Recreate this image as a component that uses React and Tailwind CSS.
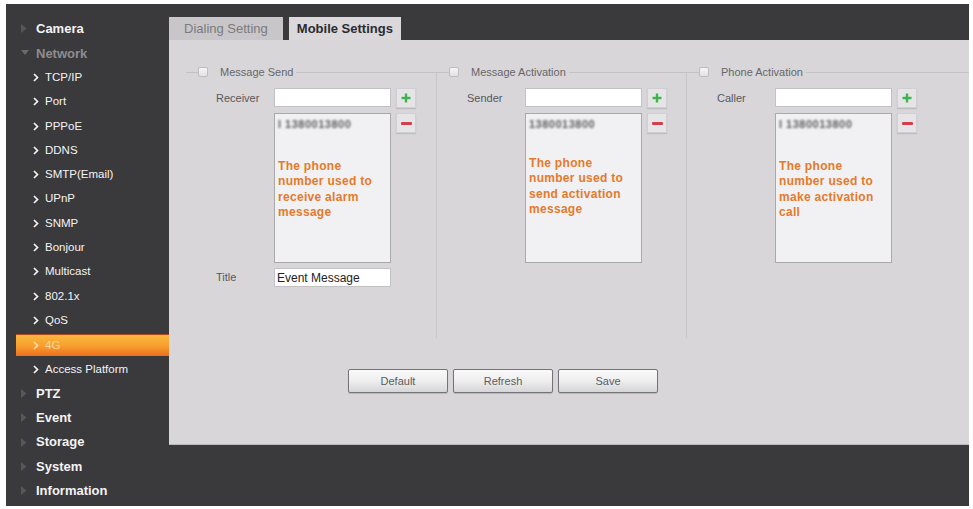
import React from "react";

const FONT = "font-['Liberation_Sans',Arial,sans-serif]";

const items = [
  { t: "Camera", k: "top" },
  { t: "Network", k: "open" },
  { t: "TCP/IP", k: "sub" },
  { t: "Port", k: "sub" },
  { t: "PPPoE", k: "sub" },
  { t: "DDNS", k: "sub" },
  { t: "SMTP(Email)", k: "sub" },
  { t: "UPnP", k: "sub" },
  { t: "SNMP", k: "sub" },
  { t: "Bonjour", k: "sub" },
  { t: "Multicast", k: "sub" },
  { t: "802.1x", k: "sub" },
  { t: "QoS", k: "sub" },
  { t: "4G", k: "sub", active: true },
  { t: "Access Platform", k: "sub" },
  { t: "PTZ", k: "top" },
  { t: "Event", k: "top" },
  { t: "Storage", k: "top" },
  { t: "System", k: "top" },
  { t: "Information", k: "top" },
];

function Chevron({ color }) {
  return (
    <svg width="6" height="9" viewBox="0 0 6 9" className="shrink-0">
      <polyline points="1,1 4.5,4.5 1,8" fill="none" stroke={color} strokeWidth="1.7" />
    </svg>
  );
}

function SideItem({ it }) {
  if (it.k === "sub") {
    if (it.active) {
      return (
        <div className="h-[24.3px] flex items-center">
          <div className="ml-[10px] h-[22px] flex-1 flex items-center pl-[17px] border-t border-[#b0461a] bg-gradient-to-b from-[#fbb73c] via-[#f7a030] to-[#ee6e1e]">
            <Chevron color="#fcd9a0" />
            <span className="ml-[6px] text-[11.5px] text-[#fbd59a]">{it.t}</span>
          </div>
        </div>
      );
    }
    return (
      <div className="h-[24.3px] flex items-center pl-[27px]">
        <Chevron color="#f4f4f4" />
        <span className="ml-[6px] text-[11.5px] text-[#f4f4f6]">{it.t}</span>
      </div>
    );
  }
  const open = it.k === "open";
  return (
    <div className="h-[24.3px] flex items-center pl-[15px]">
      {open ? (
        <svg width="8" height="6" viewBox="0 0 8 6" className="shrink-0 mr-[7px]">
          <polygon points="0,0 8,0 4,5" fill="#69686b" />
        </svg>
      ) : (
        <svg width="6" height="9" viewBox="0 0 6 9" className="shrink-0 mr-[9px]">
          <polygon points="0,0 5.5,4.5 0,9" fill="#57565a" />
        </svg>
      )}
      <span className={"text-[13px] font-bold " + (open ? "text-[#8e8d90]" : "text-[#f3f3f5]")}>{it.t}</span>
    </div>
  );
}

function Checkbox() {
  return <div className="w-[10px] h-[10px] shrink-0 rounded-[2px] border border-[#bdbcbf] bg-gradient-to-b from-[#f6f6f6] to-[#e2e2e4]" />;
}

function SmallBtn({ kind }) {
  return (
    <div className="w-[20px] h-[20px] flex items-center justify-center bg-[#e5e4e6] border border-[#d0cfd2] shadow-[0_1px_1px_rgba(0,0,0,0.12)]">
      {kind === "plus" ? (
        <svg width="10" height="10" viewBox="0 0 10 10">
          <rect x="3.8" y="0.5" width="2.4" height="9" fill="#3db54a" />
          <rect x="0.5" y="3.8" width="9" height="2.4" fill="#3db54a" />
        </svg>
      ) : (
        <div className="w-[11px] h-[3px] rounded-[1px] bg-[#d3404c]" />
      )}
    </div>
  );
}

function Column({ legend, label, blur, lines, textMt, title, cls }) {
  return (
    <div className={"h-[266px] flex flex-col " + cls}>
      <div className="h-[12px] -mt-[6px] flex items-center">
        <div className="w-[12px] h-px bg-[#c4c2c5]" />
        <Checkbox />
        <span className="ml-[12px] mr-[3px] text-[11px] text-[#676669] leading-none">{legend}</span>
        <div className="flex-1 h-px bg-[#c4c2c5]" />
      </div>
      <div className="mt-[10px] pl-[30px] grid grid-cols-[53px_117px_20px] gap-x-[5px] gap-y-[5px] items-start">
        <div className="h-[20px] flex items-center text-[11px] text-[#59585b]">{label}</div>
        <div className="h-[19px] bg-white border border-[#c2c1c4]" />
        <SmallBtn kind="plus" />
        <div />
        <div className="h-[150px] bg-[#f1f1f3] border border-[#a9a8ab] px-[3px] pt-[3px]">
          <div className="h-[15px] flex items-center text-[11px] font-bold text-[#5e5d62] blur-[1px] whitespace-nowrap tracking-[0.5px]">{blur}</div>
          <div style={{ marginTop: textMt }} className="text-[12px] font-bold leading-[15.3px] tracking-[0.3px] text-[#e6792a]">
            {lines.map((l) => (
              <div key={l} className="whitespace-nowrap">{l}</div>
            ))}
          </div>
        </div>
        <SmallBtn kind="minus" />
        {title && (
          <>
            <div className="h-[19px] flex items-center text-[11px] text-[#59585b]">Title</div>
            <div className="h-[19px] bg-white border border-[#c2c1c4] flex items-center pl-[2px] text-[12px] text-[#222] leading-none">Event Message</div>
            <div />
          </>
        )}
      </div>
    </div>
  );
}

function BigBtn({ children }) {
  return (
    <div className="w-[100px] h-[24px] flex items-center justify-center rounded-[2px] border border-[#747375] bg-gradient-to-b from-[#fafafa] via-[#eeeeee] to-[#d6d6d8] text-[11px] text-[#5c5b5f] shadow-[0_1px_1px_rgba(0,0,0,0.15)]">
      {children}
    </div>
  );
}

export default function App() {
  return (
    <div className={"w-[973px] h-[509px] bg-white pt-[4px] pl-[6px] " + FONT}>
      <div className="w-[963px] h-[502px] bg-[#3a393c] flex">
        <div className="w-[163px] pt-[12.85px] flex flex-col">
          {items.map((it) => (
            <SideItem key={it.t} it={it} />
          ))}
        </div>
        <div className="flex-1 flex flex-col">
          <div className="h-[36px] flex items-end gap-[6px]">
            <div className="h-[23px] px-[15px] flex items-center bg-[#c8c6c9] text-[13px] text-[#7b7a7d]">Dialing Setting</div>
            <div className="h-[23px] px-[8px] flex items-center bg-[#dad8db] text-[13px] font-bold text-[#2c2b2e]">Mobile Settings</div>
          </div>
          <div className="h-[405px] bg-[#d8d6d9] border-b border-[#b9b8bb] pt-[32px] pl-[17px] flex flex-col">
            <div className="flex">
              <Column
                cls="w-[250px]"
                legend="Message Send"
                label="Receiver"
                blur="I  1380013800"
                lines={["The phone", "number used to", "receive alarm", "message"]}
                textMt={27}
                title
              />
              <Column
                cls="w-[250px] border-l border-[#c8c6c9]"
                legend="Message Activation"
                label="Sender"
                blur="  1380013800"
                lines={["The phone", "number used to", "send activation", "message"]}
                textMt={24}
              />
              <Column
                cls="flex-1 border-l border-[#c8c6c9]"
                legend="Phone Activation"
                label="Caller"
                blur="I  1380013800"
                lines={["The phone", "number used to", "make activation", "call"]}
                textMt={27}
              />
            </div>
            <div className="mt-[31px] pl-[162px] flex gap-[5px]">
              <BigBtn>Default</BigBtn>
              <BigBtn>Refresh</BigBtn>
              <BigBtn>Save</BigBtn>
            </div>
          </div>
        </div>
      </div>
    </div>
  );
}
